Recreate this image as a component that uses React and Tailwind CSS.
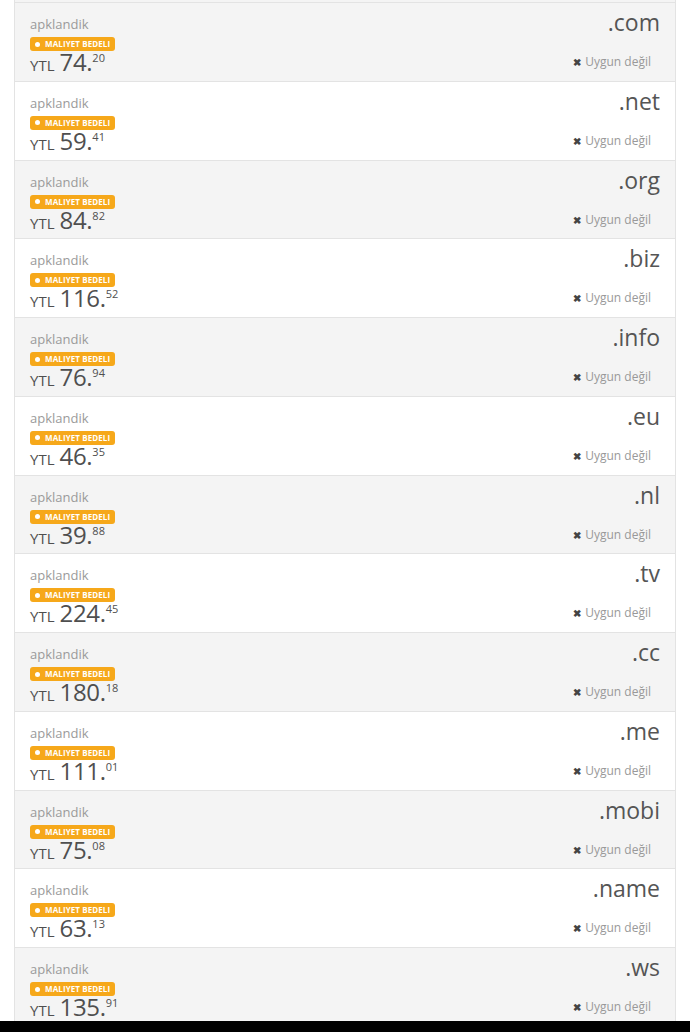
import React from "react";

const rows = [
  [".com", "74", "20"],
  [".net", "59", "41"],
  [".org", "84", "82"],
  [".biz", "116", "52"],
  [".info", "76", "94"],
  [".eu", "46", "35"],
  [".nl", "39", "88"],
  [".tv", "224", "45"],
  [".cc", "180", "18"],
  [".me", "111", "01"],
  [".mobi", "75", "08"],
  [".name", "63", "13"],
  [".ws", "135", "91"],
];

function Row({ tld, whole, frac, odd }) {
  return (
    <div
      className={`h-[78.75px] shrink-0 border-b border-[#e3e3e3] flex justify-between pl-[15px] pr-[15px] ${
        odd ? "bg-[#f4f4f4]" : "bg-white"
      }`}
    >
      <div className="flex flex-col pt-[11px]">
        <div className="text-[13px] leading-[20px] text-[#9a9a9a]">apklandik</div>
        <div className="mt-[3px] self-start flex items-center h-[14px] rounded-[3px] bg-[#f6a81a] pl-[5px] pr-[5px]">
          <span className="w-[5px] h-[5px] rounded-full bg-white mr-[5px]" />
          <span className="text-[8px] leading-[10px] font-bold text-white tracking-[0.1px]">MALIYET BEDELI</span>
        </div>
        <div className="flex items-baseline text-[#4f4f4f] h-[24px] -mt-[1px]">
          <span className="text-[15px] leading-[20px] mr-[5px]">YTL</span>
          <span className="text-[24px] leading-[24px] tracking-[-0.3px]">{whole}.</span>
          <span className="text-[11px] leading-[11px] self-start mt-[2px]">{frac}</span>
        </div>
      </div>
      <div className="flex flex-col items-end pt-[3px]">
        <div className="text-[23px] leading-[32px] text-[#555]">{tld}</div>
        <div className="mt-[15px] mr-[9px] flex items-center text-[12px] leading-[18px] text-[#999]">
          <span className="text-[#444] text-[10px] mr-[4px] font-bold">✖</span>
          Uygun değil
        </div>
      </div>
    </div>
  );
}

export default function App() {
  return (
    <div className="w-[690px] h-[1032px] bg-white flex flex-col overflow-hidden" style={{ fontFamily: '"Open Sans", sans-serif' }}>
      <div className="h-[1021px] overflow-hidden pl-[14px] pr-[14px]">
        <div className="border-l border-r border-[#e3e3e3] flex flex-col">
          <div className="h-[3px] bg-[#f4f4f4] border-b border-[#e3e3e3] shrink-0" />
          {rows.map((r, i) => (
            <Row key={r[0]} tld={r[0]} whole={r[1]} frac={r[2]} odd={i % 2 === 0} />
          ))}
        </div>
      </div>
      <div className="flex-1 bg-black" />
    </div>
  );
}
